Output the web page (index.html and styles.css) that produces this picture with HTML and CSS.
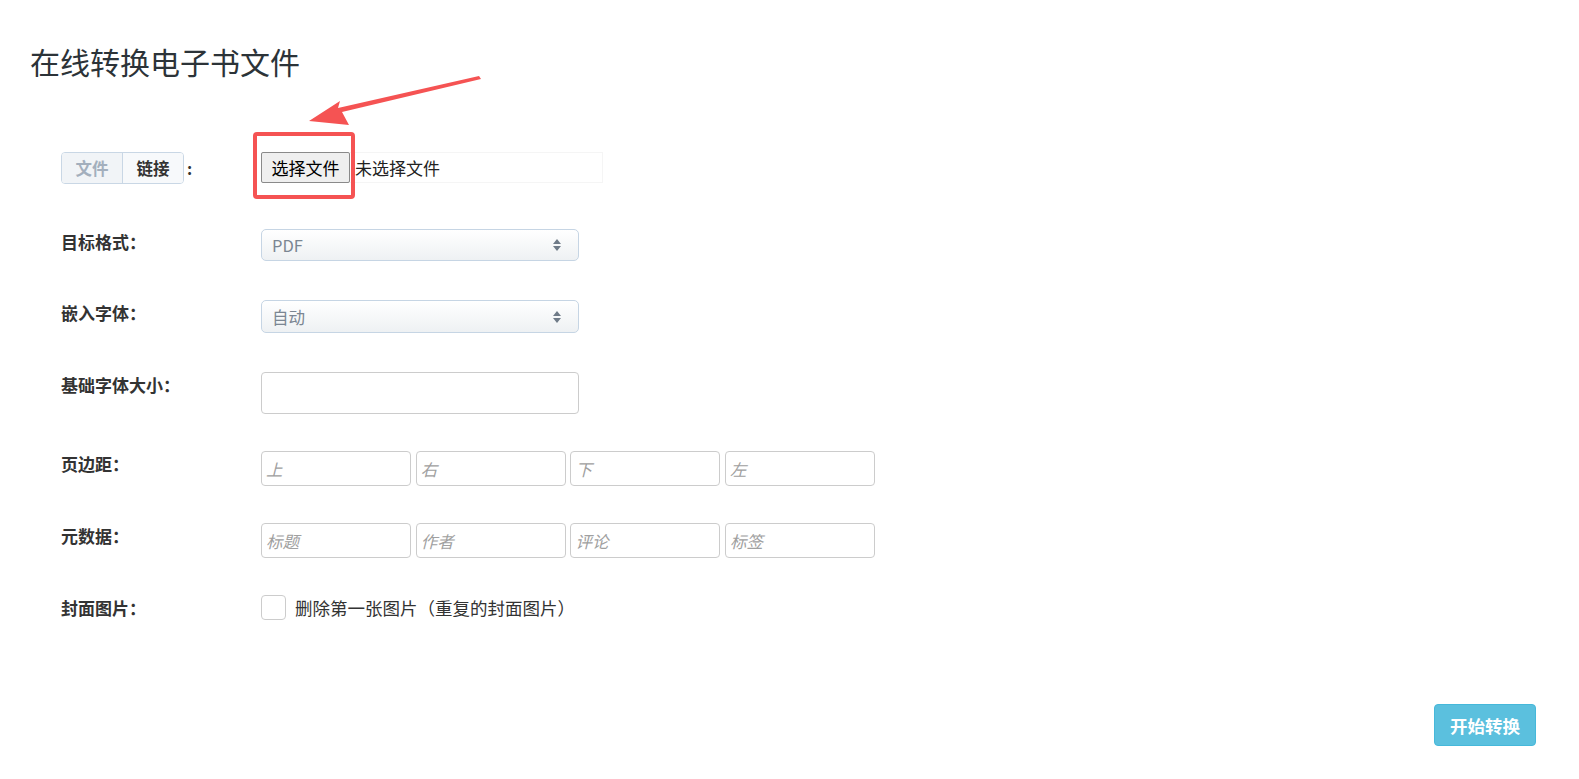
FILE: index.html
```html
<!DOCTYPE html>
<html lang="zh-CN">
<head>
  <meta charset="UTF-8">
  <meta name="viewport" content="width=device-width, initial-scale=1.0">
  <title>在线转换电子书文件</title>
  <link rel="stylesheet" href="styles.css">
</head>
<body>

<div class="page">
  <h1>在线转换电子书文件</h1>

  <form class="convert-form">
    <!-- 来源：文件 / 链接 -->
    <div class="row row-source">
      <div class="label">
        <div class="source-switch">
          <span class="switch-item active">文件</span>
          <span class="switch-item">链接</span>
        </div>
        <span class="colon">:</span>
      </div>
      <div class="file-box">
        <span class="file-button">选择文件</span>
        <span class="file-name">未选择文件</span>
      </div>
    </div>

    <div class="row row-select">
      <div class="label">目标格式：</div>
      <div class="select">
        <span>PDF</span>
        <svg class="caret" width="10" height="14" viewBox="0 0 10 14"><path d="M5 1 L9 6 H1 Z M1 8 H9 L5 13 Z" fill="#6f7b88"/></svg>
      </div>
    </div>

    <div class="row row-select">
      <div class="label">嵌入字体：</div>
      <div class="select select-tall">
        <span>自动</span>
        <svg class="caret" width="10" height="14" viewBox="0 0 10 14"><path d="M5 1 L9 6 H1 Z M1 8 H9 L5 13 Z" fill="#6f7b88"/></svg>
      </div>
    </div>

    <div class="row">
      <div class="label">基础字体大小：</div>
      <input class="text-input" type="text">
    </div>

    <div class="row">
      <div class="label">页边距：</div>
      <div class="quad">
        <input class="small-input" type="text" placeholder="上">
        <input class="small-input" type="text" placeholder="右">
        <input class="small-input" type="text" placeholder="下">
        <input class="small-input" type="text" placeholder="左">
      </div>
    </div>

    <div class="row">
      <div class="label">元数据：</div>
      <div class="quad">
        <input class="small-input" type="text" placeholder="标题">
        <input class="small-input" type="text" placeholder="作者">
        <input class="small-input" type="text" placeholder="评论">
        <input class="small-input" type="text" placeholder="标签">
      </div>
    </div>

    <div class="row row-last">
      <div class="label">封面图片：</div>
      <label class="check">
        <span class="check-box"></span>
        <span>删除第一张图片（重复的封面图片）</span>
      </label>
    </div>
  </form>

  <div class="actions">
    <button type="button" class="start-button">开始转换</button>
  </div>

  <!-- 标注：箭头和红框 -->
  <svg class="annotation" width="600" height="220" viewBox="0 0 600 220">
    <rect x="255" y="134" width="98" height="63" rx="2" fill="none" stroke="#f55353" stroke-width="4"/>
    <path d="M479 76 L481 79 L342 112 L349 125 L309 121 L340 101 L338 108 Z" fill="#f55353"/>
  </svg>
</div>

</body>
</html>
```

FILE: styles.css
```css
html, body {
  overflow: hidden;
}

body {
  margin: 0;
  padding: 0;
  font-family: "Noto Sans CJK SC", "Noto Sans", sans-serif;
  color: #333;
  background: #fff;
}

.page {
  position: relative;
}

h1 {
  margin: 0;
  padding: 41px 0 0 30px;
  font-size: 30px;
  font-weight: 400;
  line-height: 40px;
  color: #2c3338;
}

.convert-form {
  padding: 71px 0 0 61px;
}

.row {
  display: flex;
  align-items: flex-start;
  margin-bottom: 37px;
}

.row-source {
  margin-bottom: 45px;
}

.row-select {
  margin-bottom: 39px;
}

.row-last {
  margin-bottom: 0;
}

.label {
  width: 200px;
  flex: none;
  display: flex;
  align-items: center;
  font-size: 17px;
  font-weight: 700;
  line-height: 25px;
  color: #333;
}

.source-switch {
  display: flex;
  height: 30px;
  border: 1px solid #c9d7e5;
  border-radius: 4px;
  overflow: hidden;
}

.switch-item {
  width: 60px;
  text-align: center;
  line-height: 30px;
  font-size: 16.5px;
  background: #f7f9fb;
  color: #333;
}

.switch-item.active {
  background: #f1f4f7;
  color: #a3afbd;
  border-right: 1px solid #c9d7e5;
}

.colon {
  margin-left: 3px;
  font-size: 16px;
  line-height: 30px;
}

.file-box {
  display: flex;
  align-items: center;
  width: 342px;
  height: 31px;
  border: 1px solid #f5f5f5;
  border-left: none;
  box-sizing: border-box;
}

.file-button {
  height: 31px;
  width: 89px;
  box-sizing: border-box;
  border: 1px solid #8a8a8a;
  border-radius: 2px;
  background: #efefef;
  color: #000;
  font-size: 17px;
  line-height: 29px;
  text-align: center;
}

.file-name {
  margin-left: 5px;
  font-size: 17px;
  color: #222;
}

.select {
  display: flex;
  align-items: center;
  justify-content: space-between;
  box-sizing: border-box;
  width: 318px;
  height: 32px;
  padding: 0 16px 0 10px;
  border: 1px solid #c6d5e4;
  border-radius: 5px;
  background: linear-gradient(#ffffff, #eef1f3);
  color: #7b8692;
  font-size: 16.5px;
}

.select-tall {
  height: 33px;
}

.caret {
  display: block;
}

.text-input {
  box-sizing: border-box;
  width: 318px;
  height: 42px;
  margin: 0;
  border: 1px solid #cccccc;
  border-radius: 4px;
  font-family: inherit;
  font-size: 16px;
}

.quad {
  display: flex;
  gap: 4.7px;
}

.small-input {
  box-sizing: border-box;
  width: 150px;
  height: 35px;
  margin: 0;
  padding: 0 4px;
  border: 1px solid #cccccc;
  border-radius: 4px;
  font-family: inherit;
  font-size: 16.5px;
}

.small-input::placeholder {
  color: #a0a0a0;
  font-style: italic;
}

.check {
  display: flex;
  align-items: center;
  font-size: 17.5px;
  color: #333;
}

.check-box {
  box-sizing: border-box;
  width: 25px;
  height: 25px;
  margin-right: 9px;
  border: 1px solid #cccccc;
  border-radius: 4px;
}

.actions {
  display: flex;
  justify-content: flex-end;
  padding: 84px 43px 0 0;
}

.start-button {
  width: 102px;
  height: 42px;
  border: 1px solid #46b8da;
  border-radius: 4px;
  background: #5bc0de;
  color: #fff;
  font-family: inherit;
  font-size: 17.5px;
  font-weight: 700;
}

.annotation {
  position: absolute;
  left: 0;
  top: 0;
  pointer-events: none;
}
```
